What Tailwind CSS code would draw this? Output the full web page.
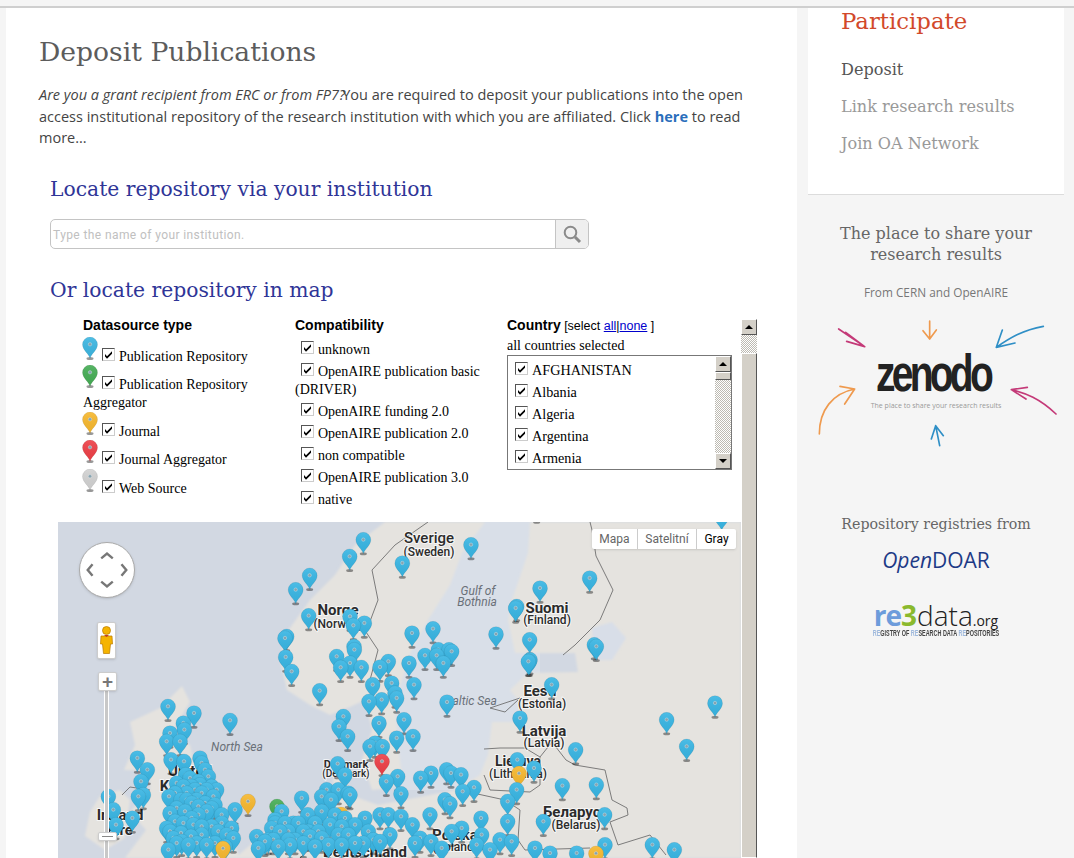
<!DOCTYPE html>
<html>
<head>
<meta charset="utf-8" />
<title>Deposit Publications</title>
<script src="https://cdn.jsdelivr.net/npm/@tailwindcss/browser@4"></script>
</head>
<body class="h-[858px] w-[1074px] overflow-hidden bg-[#f5f5f5]">

<!-- shared symbols -->
<svg class="absolute h-0 w-0">
	<defs>
		<linearGradient id="shine" x1="0" y1="0" x2="0" y2="1">
			<stop offset="0" stop-color="#fff" stop-opacity=".1" />
			<stop offset="1" stop-color="#000" stop-opacity=".04" />
		</linearGradient>
		<filter id="soft"><feGaussianBlur stdDeviation="1" /></filter>
		<symbol id="pin" viewBox="0 0 16 24" overflow="visible">
			<ellipse cx="8" cy="21.500" rx="3.500" ry="1.500" fill="#000" opacity=".4" />
			<path d="M8 21.500C7 17 .5 13 .5 7.500A7.500 7.500 0 0 1 15.500 7.500C15.500 13 9 17 8 21.500Z" fill="currentColor" />
			<path d="M8 21.500C7 17 .5 13 .5 7.500A7.500 7.500 0 0 1 15.500 7.500C15.500 13 9 17 8 21.500Z" fill="url(#shine)" stroke="#000" stroke-opacity=".14" stroke-width=".5" />
			<circle cx="8" cy="7.300" r="1.700" fill="#86a3b0" stroke="#fff" stroke-opacity=".5" stroke-width=".6" />
		</symbol>
		<symbol id="tick" viewBox="0 0 11 11">
			<path d="M2 5l2 2.300 5-5v2.400l-5 5-2-2.300z" fill="#000" />
		</symbol>
	</defs>
</svg>

<div class="h-[8px] border-b-2 border-[#cfcfcf]"></div>

<div class="flex h-[850px]">
	<!-- main column -->
	<main class="ml-[6px] w-[791px] bg-white pl-[33px] font-['Open_Sans',sans-serif]">
		<h1 class="mt-[26px] font-['DejaVu_Serif',serif] text-[26.600px] leading-[36px] text-[#5c5c5c]">Deposit Publications</h1>
		<p class="mt-[14px] w-[725px] text-[14.500px] leading-[21.500px] text-[#444]"><em>Are you a grant recipient from ERC or from FP7?</em><span class="-ml-[3px]">You are required to deposit your publications into the open access institutional repository of the research institution with which you are affiliated. Click <a class="font-bold text-[#2a6ebb]">here</a> to read more...</span></p>

		<div class="ml-[11px] w-[707px]">
			<h2 class="mt-[25px] font-['DejaVu_Serif',serif] text-[20.300px] leading-[30px] text-[#2f3597]">Locate repository via your institution</h2>
			<div class="mt-[15px] flex h-[30px] w-[539px] overflow-hidden rounded-[5px] border border-[#c4c4c4]">
				<div class="flex-1 pt-[1px] pl-[2px] font-['Roboto',sans-serif] text-[12px] leading-[28px] tracking-[.4px] text-[#c0c0c0]">Type the name of your institution.</div>
				<div class="flex w-[33px] items-center justify-center border-l border-[#c4c4c4] bg-[#efefef]">
					<svg width="20" height="20" viewBox="0 0 20 20" fill="none" stroke="#8a8a8a"><circle cx="8.500" cy="8.500" r="5.800" stroke-width="2" /><path d="M13 13l5 5" stroke-width="3" /></svg>
				</div>
			</div>
			<h2 class="mt-[26px] font-['DejaVu_Serif',serif] text-[20.300px] leading-[30px] text-[#2f3597]">Or locate repository in map</h2>

			<!-- embedded frame -->
			<div class="mt-[10px] flex h-[543px] pl-[8px]">
				<div class="flex w-[683px] flex-col">
					<div class="grid h-[207px] grid-cols-[212px_212px_212px] pl-[25px] font-['Liberation_Serif',serif] text-[14px] leading-[18px] text-black">
						<!-- datasource type -->
						<div>
							<div class="h-[22px] pt-[1px] font-['Liberation_Sans',sans-serif] text-[14px] font-bold">Datasource type</div>
							<div class="h-[28px]"><svg class="-ml-[1px] inline-block h-[24px] w-[16px] align-baseline text-[#3db7e2]"><use href="#pin" /></svg><span class="mr-[4px] ml-[4px] inline-flex h-[13px] w-[13px] border border-[#555] border-r-[#ccc] border-b-[#ccc] bg-white align-[1px]"><svg class="h-[11px] w-[11px]"><use href="#tick" /></svg></span>Publication Repository</div>
							<div class="h-[47px]"><svg class="-ml-[1px] inline-block h-[24px] w-[16px] align-baseline text-[#45ad55]"><use href="#pin" /></svg><span class="mr-[4px] ml-[4px] inline-flex h-[13px] w-[13px] border border-[#555] border-r-[#ccc] border-b-[#ccc] bg-white align-[1px]"><svg class="h-[11px] w-[11px]"><use href="#tick" /></svg></span>Publication Repository Aggregator</div>
							<div class="h-[28px]"><svg class="-ml-[1px] inline-block h-[24px] w-[16px] align-baseline text-[#f7b82e]"><use href="#pin" /></svg><span class="mr-[4px] ml-[4px] inline-flex h-[13px] w-[13px] border border-[#555] border-r-[#ccc] border-b-[#ccc] bg-white align-[1px]"><svg class="h-[11px] w-[11px]"><use href="#tick" /></svg></span>Journal</div>
							<div class="h-[29px]"><svg class="-ml-[1px] inline-block h-[24px] w-[16px] align-baseline text-[#ee4047]"><use href="#pin" /></svg><span class="mr-[4px] ml-[4px] inline-flex h-[13px] w-[13px] border border-[#555] border-r-[#ccc] border-b-[#ccc] bg-white align-[1px]"><svg class="h-[11px] w-[11px]"><use href="#tick" /></svg></span>Journal Aggregator</div>
							<div class="h-[28px]"><svg class="-ml-[1px] inline-block h-[24px] w-[16px] align-baseline text-[#d2d2d2]"><use href="#pin" /></svg><span class="mr-[4px] ml-[4px] inline-flex h-[13px] w-[13px] border border-[#555] border-r-[#ccc] border-b-[#ccc] bg-white align-[1px]"><svg class="h-[11px] w-[11px]"><use href="#tick" /></svg></span>Web Source</div>
						</div>
						<!-- compatibility -->
						<div>
							<div class="h-[26px] pt-[1px] font-['Liberation_Sans',sans-serif] text-[14px] font-bold">Compatibility</div>
							<div class="h-[22px]"><span class="mr-[4px] ml-[6px] inline-flex h-[13px] w-[13px] border border-[#555] border-r-[#ccc] border-b-[#ccc] bg-white align-[1px]"><svg class="h-[11px] w-[11px]"><use href="#tick" /></svg></span>unknown</div>
							<div class="h-[40px]"><span class="mr-[4px] ml-[6px] inline-flex h-[13px] w-[13px] border border-[#555] border-r-[#ccc] border-b-[#ccc] bg-white align-[1px]"><svg class="h-[11px] w-[11px]"><use href="#tick" /></svg></span>OpenAIRE publication basic (DRIVER)</div>
							<div class="h-[22px]"><span class="mr-[4px] ml-[6px] inline-flex h-[13px] w-[13px] border border-[#555] border-r-[#ccc] border-b-[#ccc] bg-white align-[1px]"><svg class="h-[11px] w-[11px]"><use href="#tick" /></svg></span>OpenAIRE funding 2.0</div>
							<div class="h-[22px]"><span class="mr-[4px] ml-[6px] inline-flex h-[13px] w-[13px] border border-[#555] border-r-[#ccc] border-b-[#ccc] bg-white align-[1px]"><svg class="h-[11px] w-[11px]"><use href="#tick" /></svg></span>OpenAIRE publication 2.0</div>
							<div class="h-[22px]"><span class="mr-[4px] ml-[6px] inline-flex h-[13px] w-[13px] border border-[#555] border-r-[#ccc] border-b-[#ccc] bg-white align-[1px]"><svg class="h-[11px] w-[11px]"><use href="#tick" /></svg></span>non compatible</div>
							<div class="h-[22px]"><span class="mr-[4px] ml-[6px] inline-flex h-[13px] w-[13px] border border-[#555] border-r-[#ccc] border-b-[#ccc] bg-white align-[1px]"><svg class="h-[11px] w-[11px]"><use href="#tick" /></svg></span>OpenAIRE publication 3.0</div>
							<div class="h-[22px]"><span class="mr-[4px] ml-[6px] inline-flex h-[13px] w-[13px] border border-[#555] border-r-[#ccc] border-b-[#ccc] bg-white align-[1px]"><svg class="h-[11px] w-[11px]"><use href="#tick" /></svg></span>native</div>
						</div>
						<!-- country -->
						<div>
							<div class="h-[22px] pt-[1px] font-['Liberation_Sans',sans-serif] text-[12.500px]"><b class="text-[14px]">Country</b> [select <a class="text-[#0000cc] underline">all</a>|<a class="text-[#0000cc] underline">none</a> ]</div>
							<div class="h-[18px]">all countries selected</div>
							<div class="flex h-[115px] w-[225px] justify-between overflow-hidden border border-[#777]">
								<div class="h-[113px] overflow-hidden pt-[5px] text-[14.200px]">
									<div class="h-[22px]"><span class="mr-[4px] ml-[7px] inline-flex h-[13px] w-[13px] border border-[#555] border-r-[#ccc] border-b-[#ccc] bg-white align-[1px]"><svg class="h-[11px] w-[11px]"><use href="#tick" /></svg></span>AFGHANISTAN</div>
									<div class="h-[22px]"><span class="mr-[4px] ml-[7px] inline-flex h-[13px] w-[13px] border border-[#555] border-r-[#ccc] border-b-[#ccc] bg-white align-[1px]"><svg class="h-[11px] w-[11px]"><use href="#tick" /></svg></span>Albania</div>
									<div class="h-[22px]"><span class="mr-[4px] ml-[7px] inline-flex h-[13px] w-[13px] border border-[#555] border-r-[#ccc] border-b-[#ccc] bg-white align-[1px]"><svg class="h-[11px] w-[11px]"><use href="#tick" /></svg></span>Algeria</div>
									<div class="h-[22px]"><span class="mr-[4px] ml-[7px] inline-flex h-[13px] w-[13px] border border-[#555] border-r-[#ccc] border-b-[#ccc] bg-white align-[1px]"><svg class="h-[11px] w-[11px]"><use href="#tick" /></svg></span>Argentina</div>
									<div class="h-[22px]"><span class="mr-[4px] ml-[7px] inline-flex h-[13px] w-[13px] border border-[#555] border-r-[#ccc] border-b-[#ccc] bg-white align-[1px]"><svg class="h-[11px] w-[11px]"><use href="#tick" /></svg></span>Armenia</div>
								</div>
								<!-- list scrollbar -->
								<div class="flex w-[16px] flex-col bg-[repeating-conic-gradient(#bdbab2_0_25%,#fff_0_50%)] bg-[length:2px_2px]">
									<div class="flex h-[16px] items-center justify-center border border-[#fff] border-r-[#555] border-b-[#555] bg-[#d4d0c8]"><span class="border-x-[4px] border-b-[4px] border-x-transparent border-b-black"></span></div>
									<div class="h-[8px] border border-white border-r-[#555] border-b-[#555] bg-[#d4d0c8]"></div>
									<div class="flex-1"></div>
									<div class="flex h-[16px] items-center justify-center border border-[#fff] border-r-[#555] border-b-[#555] bg-[#d4d0c8]"><span class="border-x-[4px] border-t-[4px] border-x-transparent border-t-black"></span></div>
								</div>
							</div>
						</div>
					</div>

					<!-- map canvas -->
					<div class="relative flex-1 overflow-hidden bg-[#d2d8e2]">
						<svg id="map" class="absolute inset-0 h-[336px] w-[683px]" viewBox="58 522 683 336" font-family="Roboto, sans-serif">
							<path fill="#d9dfe8" d="M370 770 400 640 470 522H540V680L500 790H400Z" />
							<g fill="#e5e3df" filter="url(#soft)">
								<path d="M385 522 355 545 335 575 310 600 285 635 280 660 287 690 310 705 330 715 352 706 365 700 372 730 362 760 372 790 392 788 402 775 398 745 395 703 410 653 428 620 450 585 462 553 485 522Z" />
								<path d="M530 522 528 553 512 600 508 620 515 653 575 653 578 672 528 673 510 690 518 700 518 722 492 722 488 755 480 775 455 790 420 797 378 805 350 795 345 765 333 775 335 812 268 830 235 858 741 858 741 522Z" />
								<path d="M182 686 160 708 130 722 135 745 124 770 150 770 150 790 130 812 146 830 125 858 240 858 226 825 214 800 196 772 190 745 170 735 190 702Z" />
								<path d="M100 796 120 790 130 800 125 838 105 850 85 836 90 812Z" />
							</g>
							<path fill="#d8dee8" filter="url(#soft)" d="M592 628 612 622 626 638 612 660 594 660Z" />
							<path fill="none" stroke="#6f6f6f" stroke-width=".9" d="M428 522 395 545 372 570 378 600 366 632 378 650 370 680 373 700M590 522 592 530 596 556 613 590 600 620 575 645 563 655M518 700 505 712 490 708 520 698M484 749 500 748 525 748 540 757 552 742 566 760 575 765 605 770 612 800 627 808 628 815 610 822 618 845 650 835 666 855M484 775 490 790 530 792 540 785 540 757M473 793 505 800 520 810 518 840 525 850 590 848M300 858 330 830 345 815M150 790 130 787 122 795" />
							<g id="labels" fill="#2b2b2b" text-anchor="middle" stroke="#fff" stroke-width="2" paint-order="stroke" stroke-opacity=".7" font-weight="700">
								<text x="429" y="543" font-size="15" font-weight="500">Sverige</text><text x="429" y="556" font-size="12" font-weight="500">(Sweden)</text>
								<text x="338" y="615" font-size="15">Norge</text><text x="338" y="628" font-size="12" font-weight="500">(Norway)</text>
								<text x="547" y="613" font-size="15">Suomi</text><text x="547" y="624" font-size="12" font-weight="500">(Finland)</text>
								<text x="540" y="696" font-size="15">Eesti</text><text x="542" y="708" font-size="12" font-weight="500">(Estonia)</text>
								<text x="544" y="736" font-size="15">Latvija</text><text x="544" y="747" font-size="12" font-weight="500">(Latvia)</text>
								<text x="518" y="766" font-size="14">Lietuva</text><text x="518" y="778" font-size="12" font-weight="500">(Lithuania)</text>
								<text x="576" y="817" font-size="15">Беларусь</text><text x="576" y="829" font-size="12" font-weight="500">(Belarus)</text>
								<text x="455" y="840" font-size="15">Polska</text><text x="455" y="851" font-size="12" font-weight="500">(Poland)</text>
								<text x="346" y="768" font-size="11">Danmark</text><text x="346" y="777" font-size="10" font-weight="500">(Denmark)</text>
								<text x="190" y="776" font-size="15">United</text><text x="190" y="791" font-size="15">Kingdom</text>
								<text x="120" y="820" font-size="15">Ireland</text><text x="120" y="835" font-size="15">Éire</text>
								<text x="365" y="857" font-size="15">Deutschland</text>
								<g fill="#6a7078" font-size="12" font-style="italic" font-weight="400" stroke="none">
									<text x="478" y="595">Gulf of</text><text x="477" y="606">Bothnia</text>
									<text x="471" y="705">Baltic Sea</text><text x="237" y="751">North Sea</text>
								</g>
							</g>
							<g id="pins"></g>
						</svg>

						<!-- pan control -->
						<div class="absolute top-[20px] left-[21px] h-[56px] w-[56px] rounded-full border border-[#aaa] bg-white shadow">
							<svg class="h-full w-full" viewBox="0 0 56 56" fill="none" stroke="#777" stroke-width="2.500"><path d="M22 16l6-5 6 5M22 40l6 5 6-5M13 22l-5 6 5 6M43 22l5 6-5 6" /></svg>
						</div>
						<!-- pegman -->
						<div class="absolute top-[100px] left-[39px] flex h-[37px] w-[19px] items-start justify-center rounded-[2px] border border-[#ccc] bg-white shadow-sm">
							<svg class="mt-[3px]" width="13" height="28" viewBox="0 0 13 28"><circle cx="6.500" cy="4.500" r="4" fill="#f5b400" stroke="#b97a00" stroke-width=".7" /><path d="M1 10h11l.5 8h-2l-1 9.500h-6l-1-9.500H.5z" fill="#f5b400" stroke="#b97a00" stroke-width=".7" /><path d="M4 9l2.500 2 2.500-2z" fill="#c0392b" /></svg>
						</div>
						<!-- zoom slider -->
						<div class="absolute top-[168px] bottom-0 left-[47px] w-[3px] bg-[#c8c8c8] outline outline-white"></div>
						<div class="absolute top-[150px] left-[40px] flex h-[19px] w-[19px] items-center justify-center rounded-[2px] border border-[#ccc] bg-white font-['Liberation_Sans',sans-serif] text-[19px] leading-none font-bold text-[#777] shadow-sm">+</div>
						<div class="absolute top-[310px] left-[40px] flex h-[9px] w-[19px] items-center justify-center rounded-[2px] border border-[#ccc] bg-white shadow-sm"><div class="h-[1px] w-[11px] bg-[#888]"></div></div>
						<!-- map type -->
						<div class="absolute top-[7px] left-[534px] flex h-[20px] rounded-[2px] bg-white font-['Roboto',sans-serif] text-[12px] leading-[20px] text-[#666] shadow">
							<div class="w-[46px] border-r border-[#ccc] text-center">Mapa</div>
							<div class="w-[59px] border-r border-[#ccc] text-center">Satelitní</div>
							<div class="w-[39px] text-center text-black">Gray</div>
						</div>
					</div>
				</div>

				<!-- frame scrollbar -->
				<div class="flex w-[16px] flex-col">
					<div class="h-[4px]"></div>
					<div class="flex h-[16px] items-center justify-center border border-white border-r-[#555] border-b-[#555] bg-[#d4d0c8]"><span class="border-x-[4px] border-b-[4px] border-x-transparent border-b-black"></span></div>
					<div class="h-[18px] bg-[repeating-conic-gradient(#bdbab2_0_25%,#fff_0_50%)] bg-[length:2px_2px]"></div>
					<div class="flex-1 border border-white border-r-[#555] bg-[#d4d0c8]"></div>
				</div>
			</div>
		</div>
	</main>

	<!-- sidebar -->
	<aside class="w-[277px] pl-[11px] font-['DejaVu_Serif',serif]">
		<div class="h-[187px] w-[256px] border-b border-[#dcdcdc] bg-white pl-[33px]">
			<h3 class="text-[22.800px] leading-[26px] text-[#d2492a]">Participate</h3>
			<div class="mt-[17px] text-[16.100px] leading-[37px] text-[#555]">Deposit</div>
			<div class="text-[16.100px] leading-[37px] text-[#999]">Link research results</div>
			<div class="text-[16.100px] leading-[37px] text-[#999]">Join OA Network</div>
		</div>

		<div class="w-[256px] pt-[28px] text-center">
			<div class="text-[16px] leading-[21px] text-[#666]">The place to share your<br>research results</div>
			<div class="mt-[18px] font-['Open_Sans',sans-serif] text-[11.800px] leading-[18px] text-[#777]">From CERN and OpenAIRE</div>

			<!-- zenodo logo -->
			<div class="relative mx-auto mt-[19px] h-[135px] w-[256px]">
				<svg class="absolute top-0 left-0 h-[135px] w-[256px]" viewBox="6 0 768 405" fill="none" stroke-width="5" stroke-linecap="round" stroke-linejoin="round">
					<g stroke="#c43a78"><path d="M98 27 176 80M119 37 176 80 122 64M750 282C700 235 660 220 616 209M664 202 616 209 660 237" /></g>
					<g stroke="#ef9a4e"><path d="M371 3V57M351 32 371 57 391 30M40 342C40 270 80 220 146 207M102 199 146 207 116 252" /></g>
					<g stroke="#2f8fc6"><path d="M712 19C650 30 610 55 571 82M589 30 571 82 627 69M401 377 389 317M376 357 389 317 412 347" /></g>
				</svg>
				<div class="absolute top-[27px] right-0 left-0 -translate-x-[3px] scale-x-[.75] text-center font-['Liberation_Sans',sans-serif] text-[52px] leading-[52px] font-bold tracking-[-5px] text-[#222]">zenodo</div>
				<div class="absolute top-[81px] right-0 left-0 text-center font-['Open_Sans',sans-serif] text-[7px] leading-[10px] text-[#999]">The place to share your research results</div>
			</div>

			<div class="mt-[59px] text-[14.200px] leading-[20px] text-[#666]">Repository registries from</div>
			<div class="mt-[11px] font-['Open_Sans',sans-serif] text-[21px] leading-[30px] text-[#1d3a86]"><i class="font-medium">Open</i>DOAR</div>
			<div class="mt-[25px] font-['Open_Sans',sans-serif] text-[28px] leading-[30px] text-[#222]"><b class="tracking-[-1px] text-[#6d9cdb]">re</b><b class="text-[#8ab92d]">3</b><span class="font-light">data</span><span class="text-[14px]">.org</span></div>
			<div class="-mt-[7px] scale-x-[.64] font-['Liberation_Sans',sans-serif] text-[8.500px] leading-[9px] font-bold whitespace-nowrap text-[#444]"><span class="text-[#9db8dc]">RE</span>GISTRY OF <span class="text-[#9db8dc]">RE</span>SEARCH DATA <span class="text-[#9db8dc]">RE</span>POSITORIES</div>
		</div>
	</aside>
</div>

<script>
	// pin tips read off the screenshot, two crops at 3x
	const left = [[925,100],[884,150],[764,207],[722,250],[761,328],[695,390],[690,395],[692,452],[710,495],[794,553],[885,330],[895,357],[928,350],[897,420],[898,430],[845,450],[857,483],[885,470],[919,483],[975,482],[1000,465],[953,535],[1010,530],[942,585],[980,580],[865,630],[852,660],[878,690],[972,650],[945,720],[960,710],[982,720],[848,772],[870,805],[994,825],[339,600],[417,620],[525,642],[247,755],[277,790],[258,825],[160,870],[250,870],[265,865],[345,680],[335,705],[375,705],[388,670],[385,650],[348,760],[387,765],[435,755],[440,770],[450,790],[392,805],[430,825],[460,810],[485,850],[410,840],[440,860],[475,870],[342,870],[378,880],[410,890],[450,890],[345,920],[410,935],[540,910],[395,860],[425,880],[470,905],[500,925],[175,910],[183,955],[232,935],[335,965],[345,975],[378,980],[408,990],[470,960],[500,950],[530,965],[535,995],[425,1010],[455,1015],[340,1030],[365,1010],[605,990],[630,1005],[660,940],[680,915],[660,950],[700,975],[715,950],[740,875],[758,925],[780,950],[800,915],[815,850],[800,870],[828,880],[850,850],[885,865],[880,860],[825,955],[850,985],[870,935],[930,935],[940,975],[975,925],[1000,925],[975,1005],[925,1010],[760,975],[720,1000],[670,1020],[640,1000],[705,1015],[780,1020],[820,1015],
		// the dense parts of Britain and Germany
		[365,830],[385,840],[405,815],[420,850],[435,835],[455,850],[470,840],[360,860],[395,880],[430,900],[455,915],[480,895],[365,905],[390,915],[430,925],[360,945],[385,950],[415,955],[440,960],[490,975],[515,985],[380,1005],[400,1015],[480,1010],[510,1020],[355,995],[440,985],[650,965],[675,975],[690,950],[730,950],[745,975],[765,990],[790,975],[800,995],[840,925],[860,960],[880,985],[900,955],[700,1000],[745,1010],[655,1000],[610,1025],[860,1015],[900,1010],[955,1000],[1005,985]]
	const right = [[228,115],[22,170],[435,245],[584,215],[362,305],[365,300],[303,383],[404,400],[403,465],[400,465],[405,460],[604,420],[598,415],[51,380],[114,367],[90,447],[42,470],[130,430],[125,447],[170,435],[162,430],[145,470],[57,535],[0,560],[5,575],[156,587],[470,535],[27,640],[54,690],[5,695],[375,635],[542,730],[815,640],[960,590],[875,720],[367,760],[417,785],[365,850],[338,885],[502,838],[604,835],[629,925],[445,945],[338,945],[77,815],[108,800],[155,790],[168,800],[198,805],[203,855],[237,843],[8,810],[18,862],[150,880],[165,892],[105,925],[18,930],[52,955],[258,935],[170,975],[200,965],[260,985],[315,1000],[350,1005],[75,995],[60,1010],[108,1005],[245,1015],[285,1030],[140,1025],[420,1025],[465,1040],[545,1040],[630,1015],[772,1015],[838,1030],[980,30],[425,5]]
	const pins = []
	left.forEach(p => pins.push([p[0] / 3 + 55, p[1] / 3 + 520, '#38b6e4']))
	right.forEach(p => pins.push([p[0] / 3 + 395, p[1] / 3 + 520, '#38b6e4']))
	pins.push([277, 820, '#45ad55'], [248, 815, '#f7b82e'], [223, 862, '#f7b82e'], [341, 828, '#f7b82e'], [519, 787, '#f7b82e'], [596, 867, '#f7b82e'], [382, 775, '#ee4047'])
	pins.sort((a, b) => a[1] - b[1])

	const group = document.getElementById('pins')
	pins.forEach(p => {
		const use = document.createElementNS('http://www.w3.org/2000/svg', 'use')
		use.setAttribute('href', '#pin')
		use.setAttribute('x', p[0] - 8)
		use.setAttribute('y', p[1] - 21)
		use.setAttribute('width', 16)
		use.setAttribute('height', 24)
		use.style.color = p[2]
		group.appendChild(use)
	})
</script>
</body>
</html>
